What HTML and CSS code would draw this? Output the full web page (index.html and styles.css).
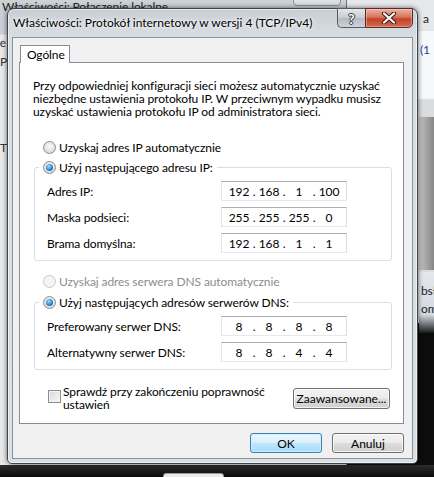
FILE: index.html
```html
<!DOCTYPE html>
<html lang="pl">
<head>
    <meta charset="UTF-8">
    <meta name="viewport" content="width=device-width, initial-scale=1.0">
    <title>Właściwości: Protokół internetowy w wersji 4 (TCP/IPv4)</title>
    <link rel="stylesheet" href="styles.css">
</head>
<body>
    <!-- okna w tle -->
    <div class="back-win">
        <div class="back-title">Właściwości: Połączenie lokalne</div>
        <span class="back-close"></span>
        <span class="back-txt t1">ie</span>
        <span class="back-txt t2">P</span>
        <span class="back-txt t3">T</span>
    </div>
    <div class="side-win">
        <span class="side-txt s1">a</span>
        <span class="side-txt s2">(1</span>
        <div class="side-bar"></div>
        <div class="side-info">
            <span>bsł</span>
            <span>oma</span>
        </div>
    </div>
    <div class="taskbar"><span class="task-btn"></span></div>

    <div class="dialog">
        <div class="titlebar">
            <span class="title">Właściwości: Protokół internetowy w wersji 4 (TCP/IPv4)</span>
            <div class="caption">
                <span class="cap-help">?</span>
                <span class="cap-close">
                    <svg width="16" height="12" viewBox="0 0 16 12">
                        <path d="M3 1.5 L13 10.5 M13 1.5 L3 10.5" stroke="#3b1a14" stroke-width="4.2" stroke-linecap="round"/>
                        <path d="M3 1.5 L13 10.5 M13 1.5 L3 10.5" stroke="#fff" stroke-width="2.2" stroke-linecap="round"/>
                    </svg>
                </span>
            </div>
        </div>

        <div class="client">
            <div class="tabs"><span class="tab">Ogólne</span></div>
            <div class="panel">
                <p class="intro">Przy odpowiedniej konfiguracji sieci możesz automatycznie uzyskać<br>niezbędne ustawienia protokołu IP. W przeciwnym wypadku musisz<br>uzyskać ustawienia protokołu IP od administratora sieci.</p>

                <div class="opt opt-ip"><span class="radio"></span>Uzyskaj adres IP automatycznie</div>

                <div class="group group-ip">
                    <div class="opt legend"><span class="radio checked"></span>Użyj następującego adresu IP:</div>
                    <div class="row">
                        <span class="lbl">Adres IP:</span>
                        <span class="ip"><i>192</i><b>.</b><i>168</i><b>.</b><i>1</i><b>.</b><i>100</i></span>
                    </div>
                    <div class="row">
                        <span class="lbl">Maska podsieci:</span>
                        <span class="ip"><i>255</i><b>.</b><i>255</i><b>.</b><i>255</i><b>.</b><i>0</i></span>
                    </div>
                    <div class="row">
                        <span class="lbl">Brama domyślna:</span>
                        <span class="ip"><i>192</i><b>.</b><i>168</i><b>.</b><i>1</i><b>.</b><i>1</i></span>
                    </div>
                </div>

                <div class="opt opt-dns disabled"><span class="radio"></span>Uzyskaj adres serwera DNS automatycznie</div>

                <div class="group group-dns">
                    <div class="opt legend"><span class="radio checked"></span>Użyj następujących adresów serwerów DNS:</div>
                    <div class="row">
                        <span class="lbl">Preferowany serwer DNS:</span>
                        <span class="ip"><i>8</i><b>.</b><i>8</i><b>.</b><i>8</i><b>.</b><i>8</i></span>
                    </div>
                    <div class="row">
                        <span class="lbl">Alternatywny serwer DNS:</span>
                        <span class="ip"><i>8</i><b>.</b><i>8</i><b>.</b><i>4</i><b>.</b><i>4</i></span>
                    </div>
                </div>

                <div class="verify">
                    <span class="check"></span>
                    <span class="verify-txt">Sprawdź przy zakończeniu poprawność<br>ustawień</span>
                    <button class="btn btn-adv">Zaawansowane...</button>
                </div>
            </div>

            <div class="actions">
                <button class="btn btn-ok">OK</button>
                <button class="btn">Anuluj</button>
            </div>
        </div>
    </div>
</body>
</html>
```

FILE: styles.css
```css
body {
    margin: 0;
    width: 434px;
    height: 477px;
    overflow: hidden;
    position: relative;
    background: #0c0c0c;
    font-family: Lato, "Noto Sans", sans-serif;
    font-size: 12px;
    letter-spacing: -0.1px;
    color: #000;
}

/* okna w tle */
.back-win {
    position: absolute;
    left: -60px;
    top: -6px;
    width: 406px;
    height: 480px;
    background: linear-gradient(#cdd2d7, #c9ced4 40px, #e9e9e9 41px);
    border-right: 1px solid #6f757b;
}
.back-title {
    position: absolute;
    left: 62px;
    top: 5px;
    color: #222;
}
.back-close {
    position: absolute;
    left: 353px;
    top: -4px;
    width: 46px;
    height: 14px;
    border: 1px solid #8b9097;
    border-radius: 0 0 4px 4px;
    background: linear-gradient(#f2f4f6, #d5d9de);
}
.back-txt {
    position: absolute;
    color: #333;
}
.t1 { left: 57px; top: 41px; }
.t2 { left: 60px; top: 60px; }
.t3 { left: 60px; top: 146px; }

.side-win {
    position: absolute;
    left: 347px;
    top: 0;
    width: 100px;
    height: 323px;
    background: linear-gradient(#e6e8eb 0, #e6e8eb 30px, #c9cdd2 30px, #f7f8fa 31px, #f7f8fa 98px, #dadcde 100px);
}
.side-txt {
    position: absolute;
    color: #222;
}
.s1 { left: 76px; top: 11px; }
.s2 { left: 73px; top: 42px; color: #1f3fa8; }
.side-bar {
    position: absolute;
    left: 72px;
    top: 117px;
    width: 28px;
    height: 153px;
    background: linear-gradient(90deg, #c4c4c4, #8a8a8a 50%, #5a5a5a);
}
.side-info {
    position: absolute;
    left: 72px;
    top: 272px;
    width: 16px;
    height: 51px;
    padding: 10px 0 0 2px;
    overflow: hidden;
    display: flex;
    flex-direction: column;
    line-height: 18px;
    background: linear-gradient(#e4e8ed, #d3d9e0 70%, #1a1a1a);
    color: #222;
}

.taskbar {
    position: absolute;
    left: 0;
    top: 465px;
    width: 434px;
    height: 12px;
    background: linear-gradient(#2e2e2e, #0a0a0a);
}
.task-btn {
    position: absolute;
    left: 163px;
    top: 8px;
    width: 59px;
    height: 10px;
    border: 1px solid #9a9a9a;
    border-radius: 3px 3px 0 0;
    background: #ececec;
}

/* okno dialogowe */
.dialog {
    position: absolute;
    left: 7px;
    top: 8px;
    width: 411px;
    height: 456px;
    box-sizing: border-box;
    border: 1px solid #3e444b;
    border-radius: 7px 7px 5px 5px;
    background: linear-gradient(#c8ced5, #d9dee3 28px, #dadfe4);
    box-shadow: 0 0 5px rgba(0, 0, 0, 0.6), inset 0 0 0 1px rgba(255, 255, 255, 0.55);
}
.titlebar {
    display: flex;
    height: 28px;
    padding: 0 4px 0 5px;
}
.title {
    line-height: 28px;
    letter-spacing: 0;
    text-shadow: 0 0 6px #fff, 0 0 3px #fff;
}
.caption {
    display: flex;
    margin: -1px 0 0 auto;
    height: 20px;
}
.cap-help,
.cap-close {
    display: flex;
    align-items: center;
    justify-content: center;
    box-sizing: border-box;
    height: 20px;
    border: 1px solid #555c64;
}
.cap-help {
    width: 28px;
    border-radius: 0 0 0 5px;
    border-right: none;
    background: linear-gradient(#e4e8ec, #c7cdd4 48%, #b3bbc3 52%, #cdd3d9);
    color: #fff;
    font-weight: bold;
    font-size: 14px;
    text-shadow: 0 0 1px #2a2f35, 1px 0 0 #3a4048, -1px 0 0 #3a4048, 0 1px 0 #3a4048, 0 -1px 0 #3a4048;
}
.cap-close {
    width: 48px;
    border-radius: 0 0 5px 0;
    border-color: #5a2a22;
    background: linear-gradient(#eab2a4, #d9735d 45%, #c4432a 55%, #d2694f);
    box-shadow: inset 0 0 0 1px rgba(255, 220, 210, 0.4);
}

.client {
    margin: 0 4px;
    height: 422px;
    box-sizing: border-box;
    border: 1px solid #8b9299;
    background: #f0f0f0;
    padding: 7px 8px 0 6px;
}
.tabs {
    display: flex;
    position: relative;
    z-index: 1;
}
.tab {
    margin: 0 0 -1px 1px;
    width: 50px;
    height: 18px;
    box-sizing: border-box;
    border: 1px solid #898c95;
    border-bottom: none;
    background: #fff;
    padding-left: 6px;
    line-height: 18px;
}
.panel {
    height: 362px;
    box-sizing: border-box;
    border: 1px solid #898c95;
    background: #fff;
}
.intro {
    margin: 16px 0 0 13px;
    line-height: 13px;
}

.opt {
    display: flex;
    align-items: center;
    height: 16px;
}
.opt-ip {
    margin: 21px 0 0 23px;
}
.opt-dns {
    margin: 12px 0 0 23px;
}
.disabled {
    color: #8d8d8d;
}
.radio {
    position: relative;
    width: 13px;
    height: 13px;
    box-sizing: border-box;
    border: 1px solid #8b8d8f;
    border-radius: 50%;
    margin-right: 3px;
    background: radial-gradient(circle at 50% 40%, #fafafa, #e3e3e3 55%, #cfcfcf);
}
.radio.checked::after {
    content: "";
    position: absolute;
    left: 2px;
    top: 2px;
    width: 7px;
    height: 7px;
    border-radius: 50%;
    background: radial-gradient(circle at 40% 35%, #a6dcff, #2587d6 55%, #0b4f94);
}
.disabled .radio {
    border-color: #c6c8ca;
    background: #f4f4f4;
}

.group {
    margin-left: 14px;
    width: 358px;
    box-sizing: border-box;
    border: 1px solid #d5dfe5;
    border-radius: 3px;
    padding-left: 12px;
}
.group-ip {
    margin-top: 12px;
    height: 94px;
}
.group-dns {
    margin-top: 13px;
    height: 68px;
}
.legend {
    width: max-content;
    margin: -9px 0 0 -8px;
    padding: 0 4px;
    background: #fff;
}
.row {
    display: flex;
    align-items: center;
    height: 20px;
    margin-top: 6px;
}
.lbl {
    width: 174px;
}
.ip {
    display: flex;
    align-items: center;
    width: 126px;
    height: 20px;
    box-sizing: border-box;
    border: 1px solid;
    border-color: #abadb3 #dbdfe6 #e3e9ef #e2e3ea;
    padding-left: 6px;
}
.ip i {
    font-style: normal;
    width: 22px;
    text-align: center;
}
.ip b {
    font-weight: normal;
    width: 8px;
    text-align: center;
}

.verify {
    display: flex;
    align-items: flex-start;
    margin: 15px 13px 0 28px;
    line-height: 13px;
}
.check {
    width: 13px;
    height: 13px;
    box-sizing: border-box;
    margin: 5px 2px 0 0;
    border: 1px solid #8b8d8f;
    background: linear-gradient(135deg, #d8d8d8, #f7f7f7);
    box-shadow: inset 0 0 0 1px #f4f4f4;
}
.verify-txt {
    flex: 1;
}

.btn {
    font: inherit;
    color: #000;
    height: 20px;
    padding: 0;
    border: 1px solid #707070;
    border-radius: 3px;
    background: linear-gradient(#f2f2f2, #ebebeb 48%, #dddddd 52%, #cfcfcf);
    box-shadow: inset 0 0 0 1px rgba(255, 255, 255, 0.75);
}
.btn-adv {
    width: 97px;
    height: 21px;
    margin-top: 3px;
}
.actions {
    display: flex;
    justify-content: flex-end;
    gap: 10px;
    margin-top: 9px;
}
.actions .btn {
    width: 72px;
}
.btn-ok {
    border-color: #3c7fb1;
    background: linear-gradient(#ecf7fd, #d9f0fc 48%, #bee6fd 52%, #a9dbf6);
    box-shadow: inset 0 0 0 1px rgba(210, 240, 255, 0.9);
}
```
